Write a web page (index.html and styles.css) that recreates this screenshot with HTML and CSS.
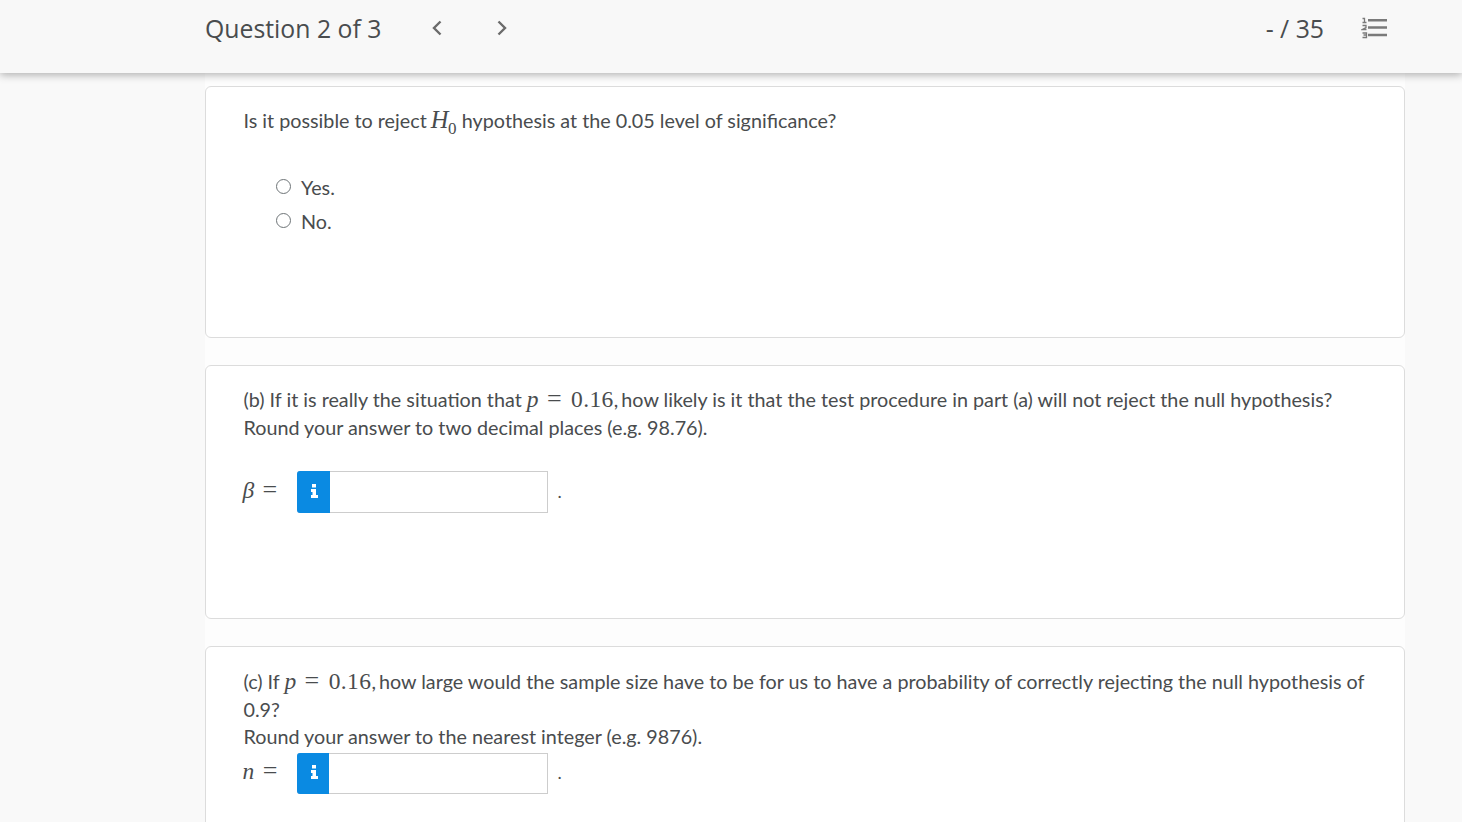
FILE: index.html
```html
<!DOCTYPE html>
<html lang="en">
<head>
<meta charset="utf-8">
<title>Question 2 of 3</title>
<link rel="stylesheet" href="styles.css">
</head>
<body>
<header class="topbar">
  <div class="topbar-inner">
    <div class="nav">
      <span class="q-title">Question 2 of 3</span>
      <svg class="chev chev-prev" width="12" height="18" viewBox="0 0 12 18"><path d="M9.500 2.500 3 9l6.500 6.500" fill="none" stroke="#6b6b6b" stroke-width="2.400"/></svg>
      <svg class="chev chev-next" width="12" height="18" viewBox="0 0 12 18"><path d="M2.500 2.500 9 9l-6.500 6.500" fill="none" stroke="#6b6b6b" stroke-width="2.400"/></svg>
    </div>
    <div class="score-wrap">
      <span class="score">- / 35</span>
      <svg class="list-icon" width="26" height="22" viewBox="0 0 26 22">
        <path d="M7 3.200h19M7 10.500h19M7 18h19" stroke="#7a7a7a" stroke-width="2.600" fill="none"/>
        <path d="M1.500 1.500H3.500V5.500M1.500 5.500H5.500M1.500 8.500H5V10.500L1.500 12.500H5.500M1.500 16H5.500V20.500H1.500M2.500 18H5" stroke="#7a7a7a" stroke-width="1.300" fill="none"/>
      </svg>
    </div>
  </div>
</header>
<main class="column">
  <section class="card card-a">
    <p class="line">Is it possible to reject <span class="math math-h"><i class="big">H</i><sub>0</sub></span> hypothesis at the 0.05 level of significance?</p>
    <ul class="options">
      <li class="option"><span class="radio"></span>Yes.</li>
      <li class="option"><span class="radio"></span>No.</li>
    </ul>
  </section>
  <section class="card card-b">
    <p class="line">(b) If it is really the situation that <span class="math"><i>p</i><span class="rel">=</span>0.16</span><span class="comma">,</span> how likely is it that the test procedure in part (a) will not reject the null hypothesis?</p>
    <p class="line">Round your answer to two decimal places (e.g. 98.76).</p>
    <div class="answer answer-b">
      <span class="math var"><i>β</i><span class="rel">=</span></span>
      <span class="field field-b">
        <span class="info"><svg width="7" height="14" viewBox="0 0 7 14"><path d="M1 0h4v3.500H1zM0 5h5v6h2v3H0v-3h1.500V8H0z" fill="#fff"/></svg></span>
        <span class="input"></span>
      </span>
      <span class="dot">.</span>
    </div>
  </section>
  <section class="card card-c">
    <p class="line">(c) If <span class="math"><i>p</i><span class="rel">=</span>0.16</span><span class="comma">,</span> how large would the sample size have to be for us to have a probability of correctly rejecting the null hypothesis of 0.9?</p>
    <p class="line">Round your answer to the nearest integer (e.g. 9876).</p>
    <div class="answer answer-c">
      <span class="math var"><i>n</i><span class="rel">=</span></span>
      <span class="field field-c">
        <span class="info"><svg width="7" height="14" viewBox="0 0 7 14"><path d="M1 0h4v3.500H1zM0 5h5v6h2v3H0v-3h1.500V8H0z" fill="#fff"/></svg></span>
        <span class="input"></span>
      </span>
      <span class="dot">.</span>
    </div>
  </section>
</main>
</body>
</html>
```
FILE: styles.css
```css
* { box-sizing: border-box; }
html, body { height: 100%; }
body {
  margin: 0;
  height: 822px;
  overflow: hidden;
  background: #f9f9f9;
  font-family: Lato, "Liberation Sans", sans-serif;
  color: #494c4e;
  font-size: 19.750px;
  display: flex;
  flex-direction: column;
}
.topbar {
  height: 73px;
  flex: none;
  background: #f8f8f8;
  box-shadow: 0 2px 8px rgba(0,0,0,.3);
  position: relative;
  z-index: 2;
}
.topbar-inner {
  width: 1200px;
  margin-left: 205px;
  height: 56px;
  display: flex;
  justify-content: space-between;
  align-items: center;
}
.nav { display: flex; align-items: center; }
.q-title { font-family: "Open Sans", sans-serif; font-size: 24.800px; width: 226px; }
.chev-next { margin-left: 53px; }
.score-wrap { display: flex; align-items: center; padding-right: 18px; }
.score { font-family: "Open Sans", sans-serif; font-size: 24.800px; margin-right: 37px; }
.column {
  width: 1200px;
  margin-left: 205px;
  background: #fdfdfd;
  padding-top: 13px;
  flex: 1;
}
.card {
  background: #fff;
  border: 1px solid #dcdcdc;
  border-radius: 6px;
  padding: 20px 37.500px;
  margin-bottom: 27px;
}
.card-a { height: 252px; }
.card-b { height: 254px; }
.card-c { height: 300px; padding-top: 21px; }
.line {
  margin: 0;
  line-height: 27.500px;
}
.math {
  font-family: "Liberation Serif", serif;
  font-size: 23.500px;
  letter-spacing: .4px;
  line-height: 0;
}
.comma { margin-right: -2px; }
.math .big { font-size: 24.500px; margin-left: -1px; }
.math sub { font-size: 17px; line-height: 0; margin-left: -1px; }
.rel { font-size: 26px; margin: 0 9px 0 8px; line-height: 0; }
.options { list-style: none; margin: 36px 0 0; padding: 0 0 0 32px; }
.option {
  display: flex;
  align-items: center;
  height: 34px;
}
.radio {
  width: 15px;
  height: 15px;
  border: 1.500px solid #6e7477;
  border-radius: 50%;
  margin-right: 10.500px;
  margin-top: -2px;
}
.answer { display: flex; align-items: center; }
.answer-b { margin-top: 30px; height: 42px; }
.answer-c { margin-top: 2px; height: 41px; }
.var { width: 53px; margin-left: -1px; margin-right: 1px; padding-bottom: 4px; line-height: 27px; }
.answer-c .var { padding-bottom: 3px; }
.field {
  width: 251px;
  height: 100%;
  display: flex;
  border: 1px solid #cdcdcd;
  border-left: 0;
  border-radius: 3px 0 0 3px;
}
.info {
  background: #0a8ae2;
  display: flex;
  align-items: center;
  justify-content: center;
  margin: -1px 0;
  padding: 0 0 2px 2px;
  border-radius: 3px 0 0 3px;
}
.field-b .info { width: 33px; }
.field-c .info { width: 32px; padding-left: 3px; }
.input { flex: 1; }
.dot { margin-left: 10px; font-size: 18px; padding-bottom: 2px; }
```
